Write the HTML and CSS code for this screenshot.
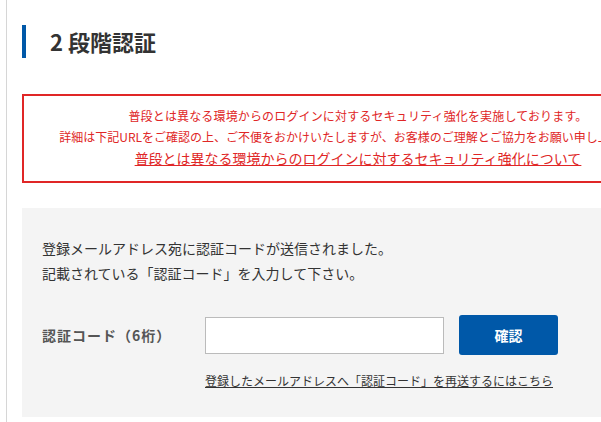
FILE: index.html
```html
<!DOCTYPE html>
<html lang="ja">
<head>
  <meta charset="UTF-8" />
  <meta name="viewport" content="width=device-width, initial-scale=1.0" />
  <title>2段階認証</title>
  <link rel="stylesheet" href="styles.css">
</head>
<body>
  <div class="page">
    <h1 class="title">2 段階認証</h1>

    <div class="notice">
      <p>普段とは異なる環境からのログインに対するセキュリティ強化を実施しております。</p>
      <p>詳細は下記URLをご確認の上、ご不便をおかけいたしますが、お客様のご理解とご協力をお願い申し上げます。</p>
      <p class="notice-link"><a href="#">普段とは異なる環境からのログインに対するセキュリティ強化について</a></p>
    </div>

    <section class="auth-box">
      <p class="lead">登録メールアドレス宛に認証コードが送信されました。<br>記載されている「認証コード」を入力して下さい。</p>
      <div class="code-row">
        <label for="authCode">認証コード（6桁）</label>
        <input type="text" id="authCode" maxlength="6" />
        <button type="button">確認</button>
      </div>
      <p class="resend"><a href="#">登録したメールアドレスへ「認証コード」を再送するにはこちら</a></p>
    </section>
  </div>
</body>
</html>
```

FILE: styles.css
```css
:root {
  --blue: #0058a8;
  --red: #e02626;
  --text: #333333;
  --grey-bg: #f4f4f4;
}
*, *::before, *::after { box-sizing: border-box; }
body {
  margin: 0;
  font-family: "Noto Sans CJK JP", "Noto Sans", sans-serif;
  color: var(--text);
  background: #fff;
  overflow: hidden;
}
.page {
  width: 688px; min-height: 422px;
  margin-left: 6px; padding: 25px 0 0 15px;
  border-left: 1px solid #d6d6d6;
}
.title {
  margin: 0 0 36px; height: 33px;
  border-left: 4px solid var(--blue);
  padding-left: 24px;
  font-size: 22px; line-height: 33px; font-weight: 700;
  color: var(--text);
}
.notice {
  border: 2px solid var(--red);
  padding: 9px 10px 12px;
  text-align: center;
  color: var(--red);
  font-size: 12px; line-height: 21px;
}
.notice p { margin: 0; white-space: nowrap; }
.notice p:first-child { letter-spacing: .15px; }
.notice-link { font-size: 14px; line-height: 22px; }
.notice-link a { color: var(--red); text-decoration: underline; }
.auth-box {
  margin-top: 25px;
  background: var(--grey-bg);
  padding: 28px 20px 27px;
}
.lead {
  margin: 0 0 29px;
  font-size: 14px; line-height: 25px;
}
.code-row { display: flex; align-items: center; height: 40px; }
.code-row label {
  width: 163px;
  font-size: 14px; font-weight: 700; color: #555;
  letter-spacing: 1px;
}
.code-row input {
  width: 239px; height: 37px;
  border: 1px solid #bbb; background: #fff;
  padding: 0 8px; font-size: 14px;
}
.code-row button {
  margin-left: 15px; width: 99px; height: 40px;
  border: none; border-radius: 3px;
  background: var(--blue); color: #fff;
  font-family: inherit; font-size: 14px; font-weight: 700;
  cursor: pointer;
}
.resend {
  margin: 17px 0 0 163px;
  font-size: 12px; line-height: 18px;
}
.resend a { color: var(--text); text-decoration: underline; }
```
